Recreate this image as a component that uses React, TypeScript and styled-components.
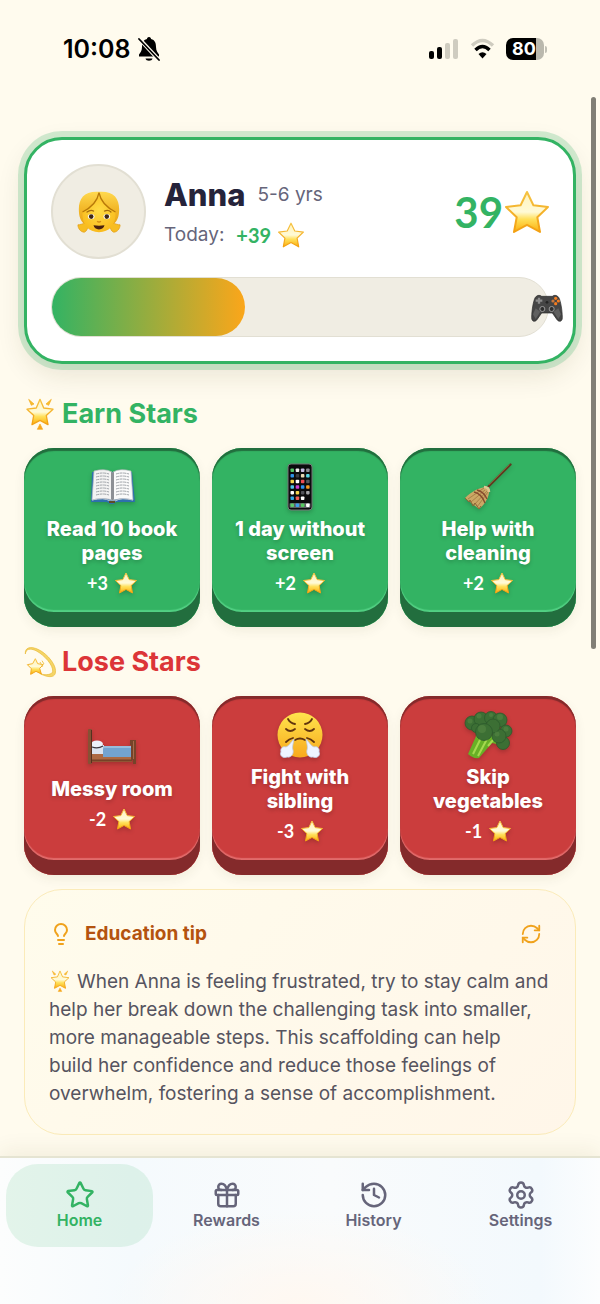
import { ReactNode } from "react";
import styled, { createGlobalStyle } from "styled-components";
import {
  Gift,
  History,
  Lightbulb,
  LucideIcon,
  RefreshCw,
  Settings,
  Star,
} from "lucide-react";

const colors = {
  background: "#fffbee",
  white: "#ffffff",
  green: "#33b363",
  red: "#dc3538",
  ink: "#25233a",
  muted: "#66657a",
  sand: "#f0ede3",
  sandBorder: "#e2dfd3",
  amber: "#f0a21c",
  rust: "#b4530f",
};

const tones = {
  earn: { face: "#33b363", side: "#226e3e", edge: "#52d083" },
  lose: { face: "#cb3d3d", side: "#842a2b", edge: "#e26b6b" },
};

type Tone = keyof typeof tones;

const GlobalStyle = createGlobalStyle`
  * {
    box-sizing: border-box;
  }

  body {
    margin: 0;
    background: ${colors.background};
    color: ${colors.ink};
    font-family: Inter, "Open Sans", sans-serif;
  }

  button {
    font-family: inherit;
  }
`;

/* ---------- Drawings ---------- */

type DrawingProps = { size?: number };

const Drawing = styled.svg<{ $size: number }>`
  display: block;
  flex: none;
  width: ${({ $size }) => $size}px;
  height: ${({ $size }) => $size}px;
  overflow: visible;
`;

const StarGradients = () => (
  <defs>
    <linearGradient id="star-fill" x1="0" y1="0" x2="0" y2="1">
      <stop offset="0" stopColor="#fff3bd" />
      <stop offset="0.5" stopColor="#fffad6" />
      <stop offset="0.68" stopColor="#ffe05a" />
      <stop offset="1" stopColor="#fbae0c" />
    </linearGradient>
    <linearGradient id="star-edge" x1="0" y1="0" x2="0" y2="1">
      <stop offset="0" stopColor="#f5c343" />
      <stop offset="1" stopColor="#f3a011" />
    </linearGradient>
  </defs>
);

const StarEmoji = ({ size = 26 }: DrawingProps) => (
  <Drawing $size={size} viewBox="2 2 44 44" aria-hidden>
    <StarGradients />
    <path
      d="M24 4 30.4 17.2 45 19 34.3 29.2 37 44 24 36.8 11 44 13.7 29.2 3 19 17.6 17.2Z"
      fill="url(#star-fill)"
      stroke="url(#star-edge)"
      strokeWidth="2"
      strokeLinejoin="round"
    />
  </Drawing>
);

const GlowingStarEmoji = ({ size = 32 }: DrawingProps) => (
  <Drawing $size={size} viewBox="0 0 48 48" aria-hidden>
    <StarGradients />
    <path
      d="M24 2 29.6 15 43.5 16.8 33.4 26.2 36 40 24 33.5 12 40 14.6 26.2 4.5 16.8 18.4 15Z"
      fill="url(#star-fill)"
      stroke="url(#star-edge)"
      strokeWidth="2"
      strokeLinejoin="round"
    />
    <g fill="#f8bd2e" stroke="#f3aa1c" strokeLinejoin="round">
      <path d="M7 2 15 9 11 11Z" />
      <path d="M41 2 33 9 37 11Z" />
      <path d="M24 39 28 47H20Z" fill="#f9a51b" />
    </g>
  </Drawing>
);

const DizzyEmoji = ({ size = 32 }: DrawingProps) => (
  <Drawing $size={size} viewBox="0 0 48 48" aria-hidden>
    <StarGradients />
    <path
      d="M2 12C1 2 10 0 21 5 36 12 50 30 47 41 45 48 35 47 25 42 34 44 42 43 43 38 44 29 31 14 18 7 9 3 3 4 2 12Z"
      fill="#f5d566"
      stroke="#e9b938"
      strokeWidth="1"
    />
    <path
      d="M17 19 20.5 26.5 29 28 23.5 33.5 26 42 18 38 10 42.500 11 34 5 28 13 26.5Z"
      fill="url(#star-fill)"
      stroke="url(#star-edge)"
      strokeWidth="1.5"
      strokeLinejoin="round"
    />
    <path d="M24 24 28 31M27 22 30 27" stroke="#f0c653" strokeWidth="1.5" />
  </Drawing>
);

const GirlEmoji = () => (
  <Drawing $size={44} viewBox="0 0 48 48" aria-hidden>
    <defs>
      <linearGradient id="girl-hair" x1="0" y1="0" x2="0" y2="1">
        <stop offset="0" stopColor="#ffd94f" />
        <stop offset="0.5" stopColor="#f3b92a" />
        <stop offset="1" stopColor="#e9a517" />
      </linearGradient>
      <radialGradient id="girl-face" cx="0.5" cy="0.4" r="0.6">
        <stop offset="0" stopColor="#ffdc45" />
        <stop offset="1" stopColor="#f9bb1d" />
      </radialGradient>
    </defs>
    <path
      d="M9 36C6 37 3 38 1 38 1 42 4 46 8 46 11 45 12 41 12 38ZM39 36C42 37 45 38 47 38 47 42 44 46 40 46 37 45 36 41 36 38Z"
      fill="#f7bd22"
      stroke="#e29c12"
      strokeWidth="0.8"
    />
    <path
      d="M24 2C8 1 2 9 2 21 2 29 4 34 8 37H40C44 34 46 29 46 21 46 9 40 1 24 2Z"
      fill="url(#girl-hair)"
    />
    <path
      d="M24 7C20 16 13 20 6 24 5 38 13 46 24 46S43 38 42 24C35 20 28 16 24 7Z"
      fill="url(#girl-face)"
    />
    <path
      d="M24 3C22 13 14 20 6 24M24 3C26 13 34 20 42 24"
      fill="none"
      stroke="#b87908"
      strokeWidth="1.4"
    />
    <path
      d="M11 24q4-3 7-1M30 23q4-2 7 1"
      fill="none"
      stroke="#a56b0b"
      strokeWidth="1.4"
      strokeLinecap="round"
    />
    <ellipse cx="15.5" cy="29" rx="3.6" ry="2.8" fill="#fff" />
    <ellipse cx="32.5" cy="29" rx="3.6" ry="2.8" fill="#fff" />
    <circle cx="15.5" cy="29" r="2.5" fill="#402715" />
    <circle cx="32.5" cy="29" r="2.5" fill="#402715" />
    <path d="M22 34q2 2 4 0" fill="none" stroke="#d48b12" strokeWidth="1.5" />
    <path d="M18 38.500q6 1 12 0q-1 4.500-6 4.500t-6-4.500Z" fill="#49200f" />
  </Drawing>
);

const GamepadEmoji = () => (
  <Drawing $size={32} viewBox="0 0 48 48" aria-hidden>
    <path
      d="M8 8C10 6 14 6 16 8H32C34 6 38 6 40 8 44 10 47 29 47 40 47 46 42 47 39 43L32 33H16L9 43C6 47 1 46 1 40 1 29 4 10 8 8Z"
      fill="#454545"
      stroke="#282828"
    />
    <path d="M3 35 7 26 14 31 7 42ZM45 35 41 26 34 31 41 42Z" fill="#606060" />
    <path d="M12 10V19M7 14.500H17" stroke="#8b8b8b" strokeWidth="3.5" />
    <g fill="#f57c1f">
      <circle cx="37" cy="11" r="2.4" />
      <circle cx="41" cy="15" r="2.4" />
      <circle cx="37" cy="19" r="2.4" />
      <circle cx="33" cy="15" r="2.4" fill="#c9793d" />
    </g>
    <circle cx="24" cy="17" r="2" fill="#242424" />
    <g fill="#2f2f2f" stroke="#999" strokeWidth="1.5">
      <circle cx="17" cy="27" r="3.8" />
      <circle cx="31" cy="27" r="3.8" />
    </g>
  </Drawing>
);

const BookEmoji = () => (
  <Drawing $size={48} viewBox="0 0 48 48" aria-hidden>
    <path d="M4 9 44 9 47 39H28L25.5 41H22L19 39H3Z" fill="#2d70ad" />
    <path
      d="M6 8Q17 5 24 9V37Q16 34 4 37Z"
      fill="#f3f3f3"
      stroke="#b4b8bd"
      strokeWidth="0.7"
    />
    <path
      d="M43 8Q32 5 25 9V37Q34 34 45 37Z"
      fill="#fafafa"
      stroke="#b4b8bd"
      strokeWidth="0.7"
    />
    <path d="M23 8.5 24.5 10 26 8.5V36L24.5 38 23 36Z" fill="#8d9095" />
    {[11, 14, 17, 20, 23, 26, 29, 32].map((y) => (
      <path
        key={y}
        d={`M8 ${y}Q15 ${y - 2} 21 ${y}M28 ${y}Q34 ${y - 2} 41 ${y}`}
        fill="none"
        stroke="#969ba0"
        strokeWidth="0.9"
        strokeDasharray="3 0.6"
      />
    ))}
    <path d="M4 37Q16 34 22 38H27Q34 34 45 37" fill="none" stroke="#c0c8d1" />
    <rect x="21" y="38" width="6" height="2" fill="#5d4b26" />
  </Drawing>
);

const APP_ROWS = [
  ["#55c467", "#eeeeee", "#c7bde3", "#8a8a92"],
  ["#2f92e8", "#3c3c42", "#e8d9b5", "#56d6e5"],
  ["#f1d54c", "#ffffff", "#ed4b53", "#55575c"],
  ["#4cc3e8", "#c93fd3", "#2e91ef", "#f29a24"],
  ["#ffffff", "#f4d34b", "#505158", "#a1a1a6"],
  ["#30a7e5", "#ee5c56", "#ffffff"],
];

const PhoneEmoji = () => (
  <Drawing $size={48} viewBox="0 0 48 48" aria-hidden>
    <rect
      x="12"
      y="1"
      width="24"
      height="46"
      rx="3"
      fill="#0b0b0d"
      stroke="#777779"
    />
    {APP_ROWS.map((row, y) =>
      row.map((fill, x) => (
        <rect
          key={`${x}-${y}`}
          x={14.5 + x * 5.2}
          y={5.5 + y * 5.6}
          width="3.5"
          height="3.5"
          rx="0.8"
          fill={fill}
        />
      ))
    )}
    <rect x="13.5" y="40" width="21" height="5" rx="1" fill="#5d6064" />
    {["#5ccb6a", "#3e9fed", "#54c95f", "#ffffff"].map((fill, x) => (
      <rect
        key={x}
        x={14.5 + x * 5.2}
        y="40.5"
        width="3.5"
        height="3.5"
        rx="0.8"
        fill={fill}
      />
    ))}
  </Drawing>
);

const BroomEmoji = () => (
  <Drawing $size={48} viewBox="0 0 48 48" aria-hidden>
    <path
      d="M46.5 1.5 23 25"
      stroke="#5e3b20"
      strokeWidth="2.4"
      strokeLinecap="round"
    />
    <path d="M45.5 1.5 25 22" stroke="#92643b" strokeWidth="0.8" />
    <path
      d="M23 24Q27 25 25 30C24 37 19 43 15 46L1 35C7 29 15 24 23 24Z"
      fill="#cba765"
    />
    <path
      d="M20 25 4 36M21 27 7 39M23 28 10 42M24 29 13 44"
      stroke="#a98147"
      strokeWidth="1"
    />
    <path
      d="M10 29Q18 31 21 40M13 27Q20 29 23 36"
      fill="none"
      stroke="#864b2e"
      strokeWidth="1.4"
    />
    <path
      d="M1 35 5 39 6 37 9 43 11 40 15 46 17 43"
      fill="none"
      stroke="#8b6435"
      strokeWidth="1"
    />
    <path d="M20 24Q25 24 25 29" stroke="#dcc894" strokeWidth="2.5" fill="none" />
  </Drawing>
);

const BedEmoji = () => (
  <Drawing $size={48} viewBox="0 0 48 48" aria-hidden>
    <rect x="4" y="31" width="40" height="8" fill="#ad6a43" />
    <path d="M4 37.5H44" stroke="#754127" strokeWidth="2" />
    <rect x="4" y="22" width="12" height="9" fill="#dce4ef" />
    <ellipse cx="9" cy="21" rx="6" ry="3.5" fill="#edf2fa" />
    <path d="M4 24Q10 26 15 23" stroke="#3d3940" strokeWidth="1.2" fill="none" />
    <path d="M16 23H43V34H15V26Z" fill="#73a3d0" />
    <path d="M16 23H43V25H15Z" fill="#98bcdc" />
    <rect x="0" y="6" width="4" height="35" rx="1" fill="#865134" />
    <path d="M3.5 7V40" stroke="#54321f" />
    <path d="M42 17H48V41H45V37H43V22H42Z" fill="#754329" />
    <path d="M45.5 18V36" stroke="#a46a48" />
  </Drawing>
);

const HuffEmoji = () => (
  <Drawing $size={48} viewBox="0 0 48 48" aria-hidden>
    <defs>
      <linearGradient id="huff-face" x1="0" y1="0" x2="0" y2="1">
        <stop offset="0" stopColor="#ffe44d" />
        <stop offset="1" stopColor="#f8a91d" />
      </linearGradient>
    </defs>
    <circle cx="24" cy="24" r="22.500" fill="url(#huff-face)" />
    <g
      fill="none"
      stroke="#61350e"
      strokeWidth="1.8"
      strokeLinecap="round"
      strokeLinejoin="round"
    >
      <path d="M12 8Q14 12 19 13M36 8Q34 12 29 13" />
      <path d="M10 18Q14 22 19 18M29 18Q34 22 38 18" />
      <path d="M10 31Q13 28 17 27M31 27Q35 28 38 31M19 29Q24 26 29 29" />
    </g>
    <g fill="#eef4ff" stroke="#bccbe5" strokeWidth="0.8">
      <path d="M18 28C17 34 16 36 17 39 18 43 15 47 11 46 7 48 3 44 5 41 4 37 7 35 10 36 13 35 15 31 18 28Z" />
      <path d="M30 28C31 34 32 36 31 39 30 43 33 47 37 46 41 48 45 44 43 41 44 37 41 35 38 36 35 35 33 31 30 28Z" />
    </g>
  </Drawing>
);

const BroccoliEmoji = () => (
  <Drawing $size={48} viewBox="0 0 48 48" aria-hidden>
    <path d="M13 23 4 43Q9 48 15 47L28 32 37 34 40 26Z" fill="#68b026" />
    <path
      d="M17 27 9 43M23 28 14 45M29 29 24 35"
      stroke="#a5d94f"
      strokeWidth="2"
    />
    <g fill="#3c6f34" stroke="#2c5a2c" strokeWidth="0.8">
      <circle cx="8" cy="12" r="7" />
      <circle cx="17" cy="8" r="7" />
      <circle cx="27" cy="7" r="6.5" />
      <circle cx="36" cy="9" r="7" />
      <circle cx="42" cy="20" r="6" />
      <circle cx="39" cy="32" r="6.5" />
      <circle cx="35" cy="25" r="7" />
      <circle cx="29" cy="15" r="7" />
      <circle cx="12" cy="17" r="4.5" />
      <circle cx="20" cy="21" r="8.5" />
    </g>
    <g fill="#5a8c47" opacity="0.5">
      <circle cx="6" cy="10" r="2.5" />
      <circle cx="15" cy="5" r="2.5" />
      <circle cx="27" cy="4" r="2" />
      <circle cx="36" cy="6" r="3" />
      <circle cx="18" cy="18" r="4" />
      <circle cx="42" cy="18" r="2.5" />
      <circle cx="33" cy="23" r="2.5" />
    </g>
  </Drawing>
);

/* ---------- Status bar ---------- */

const StatusBar = styled.header`
  display: flex;
  align-items: center;
  justify-content: space-between;
  height: 98px;
  padding: 0 53px 0 63px;
  color: #000;
`;

const StatusGroup = styled.div<{ $gap: number }>`
  display: flex;
  align-items: center;
  gap: ${({ $gap }) => $gap}px;
`;

const Clock = styled.time`
  font-size: 25px;
  line-height: 32px;
  font-weight: 600;
`;

const Battery = styled.div`
  display: flex;
  align-items: center;
  gap: 1px;

  &::after {
    content: "";
    width: 2px;
    height: 7px;
    border-radius: 0 2px 2px 0;
    background: #c2c0b5;
  }
`;

const BatteryBody = styled.span`
  width: 38px;
  padding-right: 2px;
  border-radius: 7px;
  background: linear-gradient(90deg, #000 80%, #bab8ad 80%);
  color: ${colors.white};
  font-size: 18px;
  line-height: 22px;
  font-weight: 700;
  text-align: center;
`;

/* ---------- Layout ---------- */

const Page = styled.div`
  position: relative;
  display: flex;
  flex-direction: column;
  min-height: 100vh;
`;

const Content = styled.main`
  flex: 1;
  padding: 39px 24px 21px;
`;

const ScrollThumb = styled.div`
  position: absolute;
  top: 97px;
  right: 4px;
  width: 5px;
  height: 552px;
  border-radius: 3px;
  background: #817f76;
`;

/* ---------- Child card ---------- */

const ChildCard = styled.section`
  padding: 24px;
  border: 3px solid ${colors.green};
  border-radius: 38px;
  background: ${colors.white};
  box-shadow: 0 0 0 6px rgba(51, 179, 99, 0.22),
    0 10px 28px rgba(60, 50, 20, 0.12);
`;

const ChildRow = styled.div`
  display: flex;
  align-items: center;
  gap: 18px;
  margin-bottom: 18px;
`;

const Avatar = styled.div`
  display: flex;
  align-items: center;
  justify-content: center;
  flex: none;
  width: 95px;
  height: 95px;
  border: 2px solid ${colors.sandBorder};
  border-radius: 50%;
  background: ${colors.sand};
`;

const ChildInfo = styled.div`
  flex: 1;
  padding-top: 6px;
`;

const InfoLine = styled.div`
  display: flex;
  align-items: center;
  gap: 12px;
  min-height: 40px;
`;

const ChildName = styled.h1`
  margin: 0;
  font-size: 31px;
  line-height: 40px;
  font-weight: 800;
`;

const Muted = styled.span`
  color: ${colors.muted};
  font-size: 19px;
  line-height: 24px;
`;

const TodayPoints = styled.span`
  display: flex;
  align-items: center;
  gap: 7px;
  color: ${colors.green};
  font-family: Lato, sans-serif;
  font-size: 20px;
  line-height: 24px;
  font-weight: 700;
`;

const Total = styled.div`
  display: flex;
  align-items: center;
  gap: 2px;
  color: ${colors.green};
  font-family: Lato, sans-serif;
  font-size: 42px;
  line-height: 48px;
  font-weight: 700;
`;

const Track = styled.div`
  position: relative;
  display: flex;
  align-items: center;
  height: 60px;
  border: 1px solid ${colors.sandBorder};
  border-radius: 30px;
  background: ${colors.sand};
`;

const Fill = styled.div`
  height: 100%;
  border-radius: 30px;
  background: linear-gradient(90deg, ${colors.green}, #fba61a);
`;

const Goal = styled.div`
  position: absolute;
  right: -15px;
`;

/* ---------- Star sections ---------- */

const SectionTitle = styled.h2<{ $color: string }>`
  display: flex;
  align-items: center;
  gap: 6px;
  margin: 15px 0 14px;
  color: ${({ $color }) => $color};
  font-size: 27px;
  line-height: 40px;
  font-weight: 700;

  ${ChildCard} + section > & {
    margin-top: 30px;
  }
`;

const Tiles = styled.div`
  display: grid;
  grid-template-columns: repeat(3, 1fr);
  gap: 12px;
`;

const Tile = styled.button<{ $tone: Tone }>`
  display: flex;
  flex-direction: column;
  align-items: center;
  justify-content: center;
  gap: 6px;
  min-height: 179px;
  padding: 15px 12px 32px;
  border: 0;
  border-radius: 30px;
  background: ${({ $tone }) => tones[$tone].face};
  color: ${colors.white};
  box-shadow: inset 0 3px 1px ${({ $tone }) => tones[$tone].side},
    inset 0 -15px 0 ${({ $tone }) => tones[$tone].side},
    inset 0 -17px 1px ${({ $tone }) => tones[$tone].edge},
    0 4px 12px rgba(60, 50, 20, 0.07);
  cursor: pointer;

  svg {
    filter: drop-shadow(0 2px 2px rgba(0, 0, 0, 0.2));
  }
`;

const TileLabel = styled.span`
  font-size: 20px;
  line-height: 24px;
  font-weight: 800;
  text-shadow: 0 2px 4px rgba(0, 0, 0, 0.2);
`;

const TilePoints = styled.span`
  display: flex;
  align-items: center;
  gap: 7px;
  font-family: Lato, sans-serif;
  font-size: 18px;
  line-height: 24px;
  font-weight: 700;
`;

/* ---------- Education tip ---------- */

const TipCard = styled.section`
  margin-top: 14px;
  padding: 24px 24px 26px;
  border: 1px solid #fbebb9;
  border-radius: 38px;
  background: linear-gradient(135deg, #fffcec, #fff6e9);
`;

const TipHeader = styled.div`
  display: flex;
  align-items: center;
  gap: 12px;
  margin-bottom: 14px;
`;

const TipTitle = styled.h2`
  flex: 1;
  margin: 0;
  color: ${colors.rust};
  font-size: 19px;
  line-height: 24px;
  font-weight: 700;
`;

const RefreshButton = styled.button`
  display: flex;
  align-items: center;
  justify-content: center;
  width: 40px;
  height: 40px;
  padding: 0;
  border: 0;
  background: none;
  color: ${colors.amber};
  cursor: pointer;
`;

const TipText = styled.p`
  margin: 0;
  color: #56545f;
  font-size: 19px;
  line-height: 28px;

  svg {
    display: inline-block;
    margin-right: 6px;
    vertical-align: -4px;
  }
`;

/* ---------- Tab bar ---------- */

const TabBar = styled.nav`
  position: sticky;
  bottom: 0;
  display: grid;
  grid-template-columns: repeat(4, 1fr);
  padding: 6px 6px 57px;
  border-top: 2px solid #e5e4d2;
  background: radial-gradient(
      ellipse at 50% 100%,
      #fff8f1,
      rgba(255, 248, 241, 0) 45%
    ),
    linear-gradient(90deg, #fcfdfd, #f5fafd 22%, #f9fbfc 55%, #f3f9fd 90%, #fcfdfe);
  box-shadow: 0 -6px 20px rgba(90, 70, 20, 0.07);
`;

const Tab = styled.a<{ $active: boolean }>`
  display: flex;
  flex-direction: column;
  align-items: center;
  padding: 16px 0 17px;
  border-radius: 32px;
  background: ${({ $active }) =>
    $active ? "rgba(51, 179, 99, 0.12)" : "transparent"};
  color: ${({ $active }) => ($active ? colors.green : colors.muted)};
  font-size: 16px;
  line-height: 20px;
  font-weight: 600;
  text-decoration: none;
`;

type Task = { label: string; points: string; icon: ReactNode };

const EARN_TASKS: Task[] = [
  { label: "Read 10 book pages", points: "+3", icon: <BookEmoji /> },
  { label: "1 day without screen", points: "+2", icon: <PhoneEmoji /> },
  { label: "Help with cleaning", points: "+2", icon: <BroomEmoji /> },
];

const LOSE_TASKS: Task[] = [
  { label: "Messy room", points: "-2", icon: <BedEmoji /> },
  { label: "Fight with sibling", points: "-3", icon: <HuffEmoji /> },
  { label: "Skip vegetables", points: "-1", icon: <BroccoliEmoji /> },
];

const TABS: { label: string; icon: LucideIcon }[] = [
  { label: "Home", icon: Star },
  { label: "Rewards", icon: Gift },
  { label: "History", icon: History },
  { label: "Settings", icon: Settings },
];

const PROGRESS = 39;

const TaskTiles = ({ tasks, tone }: { tasks: Task[]; tone: Tone }) => (
  <Tiles>
    {tasks.map(({ label, points, icon }) => (
      <Tile key={label} $tone={tone} type="button">
        {icon}
        <TileLabel>{label}</TileLabel>
        <TilePoints>
          {points} <StarEmoji size={22} />
        </TilePoints>
      </Tile>
    ))}
  </Tiles>
);

const App = () => (
  <>
    <GlobalStyle />
    <Page>
      <StatusBar>
        <StatusGroup $gap={7}>
          <Clock>10:08</Clock>
          <svg width="22" height="24" viewBox="0 0 22 24" aria-hidden>
            <path
              d="M11 0C9.500 0 9 1 9 2 5 3 4 6 4 10 4 14 2 16 1 17.500V19.500H21V17.500C20 16 18 14 18 10 18 6 17 3 13 2 13 1 12.500 0 11 0ZM7.500 21.500H14.500C14 24.500 8 24.500 7.500 21.500Z"
              fill="#000"
            />
            <path d="M1 1.500 21 23" stroke={colors.background} strokeWidth="4" />
            <path
              d="M1 2 21 23"
              stroke="#000"
              strokeWidth="1.8"
              strokeLinecap="round"
            />
          </svg>
        </StatusGroup>
        <StatusGroup $gap={11}>
          <svg width="30" height="22" viewBox="0 0 30 22" aria-hidden>
            <rect x="0" y="13" width="5" height="8" rx="2" />
            <rect x="8" y="9" width="5" height="12" rx="2" />
            <rect x="16" y="5" width="5" height="16" rx="2" fill="#cfccc0" />
            <rect x="24" y="1" width="5" height="20" rx="2" fill="#cfccc0" />
          </svg>
          <svg width="25" height="22" viewBox="0 0 25 22" aria-hidden>
            <path
              d="M2 7.500Q12.500-2.500 23 7.500"
              fill="none"
              stroke="#cfccc0"
              strokeWidth="3.4"
            />
            <path
              d="M5.500 12Q12.500 5 19.500 12"
              fill="none"
              stroke="#000"
              strokeWidth="3.4"
            />
            <path d="M8.500 16Q12.500 12.500 16.500 16L12.500 20.500Z" />
          </svg>
          <Battery>
            <BatteryBody>80</BatteryBody>
          </Battery>
        </StatusGroup>
      </StatusBar>
      <Content>
        <ChildCard>
          <ChildRow>
            <Avatar>
              <GirlEmoji />
            </Avatar>
            <ChildInfo>
              <InfoLine>
                <ChildName>Anna</ChildName>
                <Muted>5-6 yrs</Muted>
              </InfoLine>
              <InfoLine>
                <Muted>Today:</Muted>
                <TodayPoints>
                  +39 <StarEmoji size={26} />
                </TodayPoints>
              </InfoLine>
            </ChildInfo>
            <Total>
              39
              <StarEmoji size={44} />
            </Total>
          </ChildRow>
          <Track
            role="progressbar"
            aria-label="Reward progress"
            aria-valuenow={PROGRESS}
            aria-valuemin={0}
            aria-valuemax={100}
          >
            <Fill style={{ width: `${PROGRESS}%` }} />
            <Goal>
              <GamepadEmoji />
            </Goal>
          </Track>
        </ChildCard>
        <section>
          <SectionTitle $color={colors.green}>
            <GlowingStarEmoji />
            Earn Stars
          </SectionTitle>
          <TaskTiles tasks={EARN_TASKS} tone="earn" />
        </section>
        <section>
          <SectionTitle $color={colors.red}>
            <DizzyEmoji />
            Lose Stars
          </SectionTitle>
          <TaskTiles tasks={LOSE_TASKS} tone="lose" />
        </section>
        <TipCard>
          <TipHeader>
            <Lightbulb size={24} color={colors.amber} strokeWidth={2} />
            <TipTitle>Education tip</TipTitle>
            <RefreshButton type="button" aria-label="New tip">
              <RefreshCw size={22} />
            </RefreshButton>
          </TipHeader>
          <TipText>
            <GlowingStarEmoji size={22} />
            When Anna is feeling frustrated, try to stay calm and help her break
            down the challenging task into smaller, more manageable steps. This
            scaffolding can help build&nbsp;her confidence and reduce those
            feelings of overwhelm, fostering a sense of accomplishment.
          </TipText>
        </TipCard>
      </Content>
      <TabBar>
        {TABS.map(({ label, icon: Icon }, index) => (
          <Tab key={label} href="#" $active={index === 0}>
            <Icon size={30} />
            {label}
          </Tab>
        ))}
      </TabBar>
      <ScrollThumb />
    </Page>
  </>
);

export default App;
